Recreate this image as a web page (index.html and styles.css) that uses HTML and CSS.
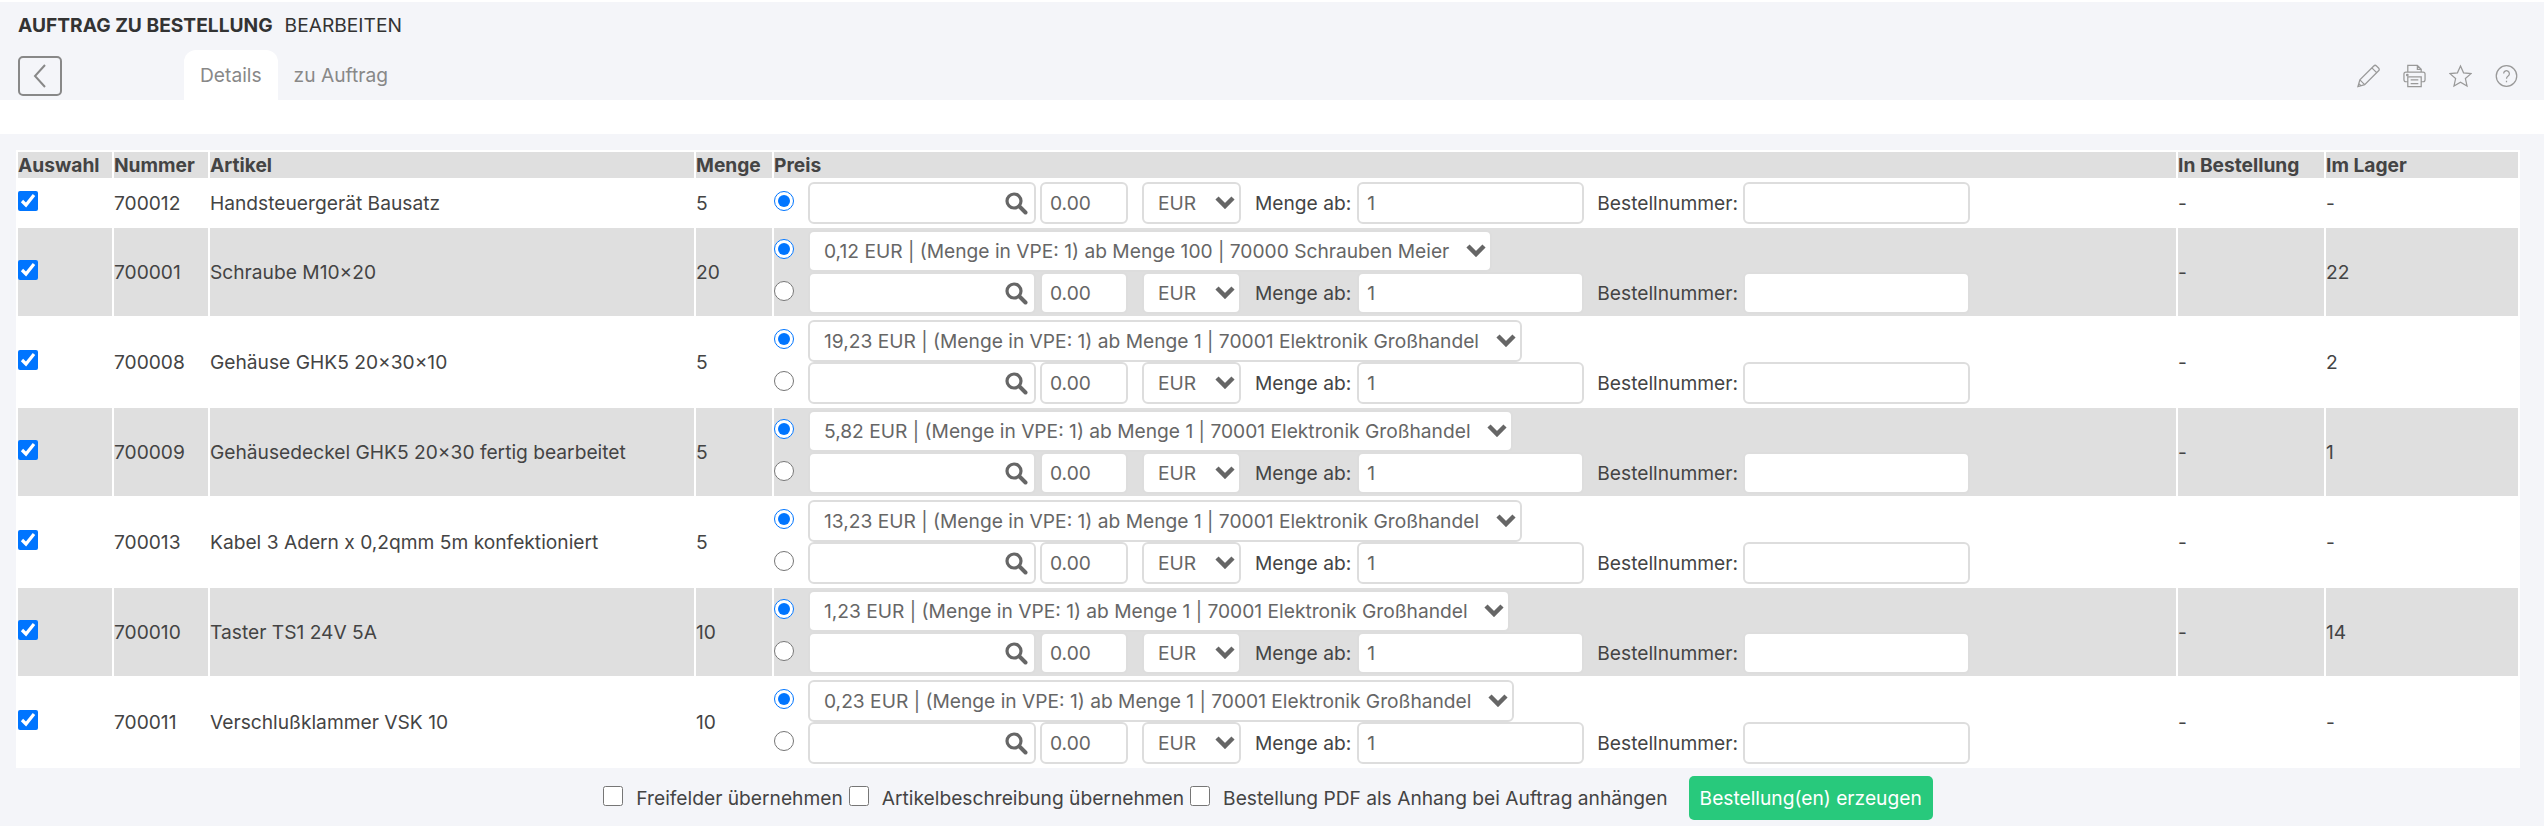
FILE: index.html
```html
<!DOCTYPE html>
<html lang="de">
<head>
<meta charset="utf-8">
<title>Auftrag zu Bestellung</title>
<link rel="stylesheet" href="styles.css">
</head>
<body>
<header class="head">
  <h1 class="title"><strong>AUFTRAG ZU BESTELLUNG</strong><span>BEARBEITEN</span></h1>
  <div class="bar">
    <button class="back" type="button" aria-label="Zurück"><svg width="16" height="26" viewBox="0 0 16 26"><path d="M13 2 3 13l10 11" fill="none" stroke="#888" stroke-width="2"/></svg></button>
    <nav class="tabs"><a class="tab active">Details</a><a class="tab">zu Auftrag</a></nav>
    <div class="tools">
      <svg width="23" height="24" viewBox="0 0 24 24" fill="none" stroke="#999" stroke-width="1.3"><path d="M1 23l2-7L17.5 1.5a2 2 0 0 1 2.8 0l2.2 2.2a2 2 0 0 1 0 2.8L8 21zM3 16l5 5M15.5 3.5l5 5M2 20l2 2"/></svg>
      <svg width="23" height="24" viewBox="0 0 24 24" fill="none" stroke="#999" stroke-width="1.3"><path d="M5 8V1h10l4 4v3M15 1v4h4M5 18H3a2 2 0 0 1-2-2v-6a2 2 0 0 1 2-2h18a2 2 0 0 1 2 2v6a2 2 0 0 1-2 2h-2M5 13h14v10H5zM8 16h8M8 20h8"/><circle cx="4.500" cy="11" r=".8"/></svg>
      <svg width="23" height="24" viewBox="0 0 24 24" fill="none" stroke="#999" stroke-width="1.3"><path d="m12 1.500 3.200 7.200 7.800.8-5.900 5.200 1.700 7.700L12 18.400l-6.800 4 1.700-7.700L1 9.500l7.800-.8z"/></svg>
      <svg width="23" height="24" viewBox="0 0 24 24" fill="none" stroke="#999" stroke-width="1.3"><circle cx="12" cy="12" r="10.700"/><path d="M9 9.500a3 3 0 1 1 4.700 2.500c-1 .7-1.700 1.300-1.700 2.800M12 17v1.500"/></svg>
    </div>
  </div>
</header>
<div class="gap"></div>
<main class="main">
  <table class="grid">
    <colgroup><col class="c1"><col class="c2"><col class="c3"><col class="c4"><col class="c5"><col class="c6"><col class="c7"></colgroup>
    <thead><tr><th>Auswahl</th><th>Nummer</th><th>Artikel</th><th>Menge</th><th>Preis</th><th>In Bestellung</th><th>Im Lager</th></tr></thead>
    <tbody>
      <tr>
        <td><input class="tick" type="checkbox" checked></td><td>700012</td><td>Handsteuergerät Bausatz</td><td>5</td>
        <td>
          <div class="line"><input class="pick" type="radio" name="p1" checked>
            <span class="search"><input class="field f-search" type="text"><svg class="lens" width="24" height="24" viewBox="0 0 24 24"><circle cx="10" cy="10" r="7" fill="none" stroke="#666" stroke-width="3.200"/><path d="m15.500 15.500 6 6" stroke="#666" stroke-width="4" stroke-linecap="round"/></svg></span>
            <input class="field f-price" type="text" value="0.00">
            <span class="sel"><select class="field f-cur"><option>EUR</option></select><svg class="chev" width="20" height="14" viewBox="0 0 20 14"><path d="m2 3 8 8 8-8" fill="none" stroke="#666" stroke-width="4.500"/></svg></span>
            <label class="lbl">Menge ab:</label><input class="field f-qty" type="text" value="1">
            <label class="lbl lbl2">Bestellnummer:</label><input class="field f-no" type="text">
          </div>
        </td>
        <td>-</td><td>-</td>
      </tr>
      <tr class="alt">
        <td><input class="tick" type="checkbox" checked></td><td>700001</td><td>Schraube M10×20</td><td>20</td>
        <td>
          <div class="line"><input class="pick" type="radio" name="p2" checked>
            <span class="sel"><select class="field f-offer"><option>0,12 EUR | (Menge in VPE: 1) ab Menge 100 | 70000 Schrauben Meier</option></select><svg class="chev" width="20" height="14" viewBox="0 0 20 14"><path d="m2 3 8 8 8-8" fill="none" stroke="#666" stroke-width="4.500"/></svg></span>
          </div>
          <div class="line"><input class="pick" type="radio" name="p2">
            <span class="search"><input class="field f-search" type="text"><svg class="lens" width="24" height="24" viewBox="0 0 24 24"><circle cx="10" cy="10" r="7" fill="none" stroke="#666" stroke-width="3.200"/><path d="m15.500 15.500 6 6" stroke="#666" stroke-width="4" stroke-linecap="round"/></svg></span>
            <input class="field f-price" type="text" value="0.00">
            <span class="sel"><select class="field f-cur"><option>EUR</option></select><svg class="chev" width="20" height="14" viewBox="0 0 20 14"><path d="m2 3 8 8 8-8" fill="none" stroke="#666" stroke-width="4.500"/></svg></span>
            <label class="lbl">Menge ab:</label><input class="field f-qty" type="text" value="1">
            <label class="lbl lbl2">Bestellnummer:</label><input class="field f-no" type="text">
          </div>
        </td>
        <td>-</td><td>22</td>
      </tr>
      <tr>
        <td><input class="tick" type="checkbox" checked></td><td>700008</td><td>Gehäuse GHK5 20×30×10</td><td>5</td>
        <td>
          <div class="line"><input class="pick" type="radio" name="p3" checked>
            <span class="sel"><select class="field f-offer"><option>19,23 EUR | (Menge in VPE: 1) ab Menge 1 | 70001 Elektronik Großhandel</option></select><svg class="chev" width="20" height="14" viewBox="0 0 20 14"><path d="m2 3 8 8 8-8" fill="none" stroke="#666" stroke-width="4.500"/></svg></span>
          </div>
          <div class="line"><input class="pick" type="radio" name="p3">
            <span class="search"><input class="field f-search" type="text"><svg class="lens" width="24" height="24" viewBox="0 0 24 24"><circle cx="10" cy="10" r="7" fill="none" stroke="#666" stroke-width="3.200"/><path d="m15.500 15.500 6 6" stroke="#666" stroke-width="4" stroke-linecap="round"/></svg></span>
            <input class="field f-price" type="text" value="0.00">
            <span class="sel"><select class="field f-cur"><option>EUR</option></select><svg class="chev" width="20" height="14" viewBox="0 0 20 14"><path d="m2 3 8 8 8-8" fill="none" stroke="#666" stroke-width="4.500"/></svg></span>
            <label class="lbl">Menge ab:</label><input class="field f-qty" type="text" value="1">
            <label class="lbl lbl2">Bestellnummer:</label><input class="field f-no" type="text">
          </div>
        </td>
        <td>-</td><td>2</td>
      </tr>
      <tr class="alt">
        <td><input class="tick" type="checkbox" checked></td><td>700009</td><td>Gehäusedeckel GHK5 20×30 fertig bearbeitet</td><td>5</td>
        <td>
          <div class="line"><input class="pick" type="radio" name="p4" checked>
            <span class="sel"><select class="field f-offer"><option>5,82 EUR | (Menge in VPE: 1) ab Menge 1 | 70001 Elektronik Großhandel</option></select><svg class="chev" width="20" height="14" viewBox="0 0 20 14"><path d="m2 3 8 8 8-8" fill="none" stroke="#666" stroke-width="4.500"/></svg></span>
          </div>
          <div class="line"><input class="pick" type="radio" name="p4">
            <span class="search"><input class="field f-search" type="text"><svg class="lens" width="24" height="24" viewBox="0 0 24 24"><circle cx="10" cy="10" r="7" fill="none" stroke="#666" stroke-width="3.200"/><path d="m15.500 15.500 6 6" stroke="#666" stroke-width="4" stroke-linecap="round"/></svg></span>
            <input class="field f-price" type="text" value="0.00">
            <span class="sel"><select class="field f-cur"><option>EUR</option></select><svg class="chev" width="20" height="14" viewBox="0 0 20 14"><path d="m2 3 8 8 8-8" fill="none" stroke="#666" stroke-width="4.500"/></svg></span>
            <label class="lbl">Menge ab:</label><input class="field f-qty" type="text" value="1">
            <label class="lbl lbl2">Bestellnummer:</label><input class="field f-no" type="text">
          </div>
        </td>
        <td>-</td><td>1</td>
      </tr>
      <tr>
        <td><input class="tick" type="checkbox" checked></td><td>700013</td><td>Kabel 3 Adern x 0,2qmm 5m konfektioniert</td><td>5</td>
        <td>
          <div class="line"><input class="pick" type="radio" name="p5" checked>
            <span class="sel"><select class="field f-offer"><option>13,23 EUR | (Menge in VPE: 1) ab Menge 1 | 70001 Elektronik Großhandel</option></select><svg class="chev" width="20" height="14" viewBox="0 0 20 14"><path d="m2 3 8 8 8-8" fill="none" stroke="#666" stroke-width="4.500"/></svg></span>
          </div>
          <div class="line"><input class="pick" type="radio" name="p5">
            <span class="search"><input class="field f-search" type="text"><svg class="lens" width="24" height="24" viewBox="0 0 24 24"><circle cx="10" cy="10" r="7" fill="none" stroke="#666" stroke-width="3.200"/><path d="m15.500 15.500 6 6" stroke="#666" stroke-width="4" stroke-linecap="round"/></svg></span>
            <input class="field f-price" type="text" value="0.00">
            <span class="sel"><select class="field f-cur"><option>EUR</option></select><svg class="chev" width="20" height="14" viewBox="0 0 20 14"><path d="m2 3 8 8 8-8" fill="none" stroke="#666" stroke-width="4.500"/></svg></span>
            <label class="lbl">Menge ab:</label><input class="field f-qty" type="text" value="1">
            <label class="lbl lbl2">Bestellnummer:</label><input class="field f-no" type="text">
          </div>
        </td>
        <td>-</td><td>-</td>
      </tr>
      <tr class="alt">
        <td><input class="tick" type="checkbox" checked></td><td>700010</td><td>Taster TS1 24V 5A</td><td>10</td>
        <td>
          <div class="line"><input class="pick" type="radio" name="p6" checked>
            <span class="sel"><select class="field f-offer"><option>1,23 EUR | (Menge in VPE: 1) ab Menge 1 | 70001 Elektronik Großhandel</option></select><svg class="chev" width="20" height="14" viewBox="0 0 20 14"><path d="m2 3 8 8 8-8" fill="none" stroke="#666" stroke-width="4.500"/></svg></span>
          </div>
          <div class="line"><input class="pick" type="radio" name="p6">
            <span class="search"><input class="field f-search" type="text"><svg class="lens" width="24" height="24" viewBox="0 0 24 24"><circle cx="10" cy="10" r="7" fill="none" stroke="#666" stroke-width="3.200"/><path d="m15.500 15.500 6 6" stroke="#666" stroke-width="4" stroke-linecap="round"/></svg></span>
            <input class="field f-price" type="text" value="0.00">
            <span class="sel"><select class="field f-cur"><option>EUR</option></select><svg class="chev" width="20" height="14" viewBox="0 0 20 14"><path d="m2 3 8 8 8-8" fill="none" stroke="#666" stroke-width="4.500"/></svg></span>
            <label class="lbl">Menge ab:</label><input class="field f-qty" type="text" value="1">
            <label class="lbl lbl2">Bestellnummer:</label><input class="field f-no" type="text">
          </div>
        </td>
        <td>-</td><td>14</td>
      </tr>
      <tr>
        <td><input class="tick" type="checkbox" checked></td><td>700011</td><td>Verschlußklammer VSK 10</td><td>10</td>
        <td>
          <div class="line"><input class="pick" type="radio" name="p7" checked>
            <span class="sel"><select class="field f-offer"><option>0,23 EUR | (Menge in VPE: 1) ab Menge 1 | 70001 Elektronik Großhandel</option></select><svg class="chev" width="20" height="14" viewBox="0 0 20 14"><path d="m2 3 8 8 8-8" fill="none" stroke="#666" stroke-width="4.500"/></svg></span>
          </div>
          <div class="line"><input class="pick" type="radio" name="p7">
            <span class="search"><input class="field f-search" type="text"><svg class="lens" width="24" height="24" viewBox="0 0 24 24"><circle cx="10" cy="10" r="7" fill="none" stroke="#666" stroke-width="3.200"/><path d="m15.500 15.500 6 6" stroke="#666" stroke-width="4" stroke-linecap="round"/></svg></span>
            <input class="field f-price" type="text" value="0.00">
            <span class="sel"><select class="field f-cur"><option>EUR</option></select><svg class="chev" width="20" height="14" viewBox="0 0 20 14"><path d="m2 3 8 8 8-8" fill="none" stroke="#666" stroke-width="4.500"/></svg></span>
            <label class="lbl">Menge ab:</label><input class="field f-qty" type="text" value="1">
            <label class="lbl lbl2">Bestellnummer:</label><input class="field f-no" type="text">
          </div>
        </td>
        <td>-</td><td>-</td>
      </tr>
    </tbody>
  </table>
  <div class="foot">
    <label class="opt"><input class="box" type="checkbox"><span>Freifelder übernehmen</span></label>
    <label class="opt"><input class="box" type="checkbox"><span>Artikelbeschreibung übernehmen</span></label>
    <label class="opt"><input class="box" type="checkbox"><span>Bestellung PDF als Anhang bei Auftrag anhängen</span></label>
    <button class="go" type="button">Bestellung(en) erzeugen</button>
  </div>
</main>
</body>
</html>
```

FILE: styles.css
```css
* { box-sizing: border-box; }
html, body { margin: 0; padding: 0; }
body {
  background: #f4f5f9;
  color: #444;
  font-family: Inter, "Liberation Sans", sans-serif;
  font-size: 19.2px;
  line-height: 26px;
  border-top: 2px solid #fff;
}
.head { height: 98px; padding: 8px 26px 0 18px; }
.title { margin: 0; height: 30px; font-size: 19.2px; line-height: 30px; font-weight: 400; color: #333; display: flex; gap: 12px; }
.title strong { font-weight: 700; }
.bar { display: flex; height: 50px; margin-top: 10px; }
.back { width: 44px; height: 40px; margin-top: 6px; padding: 0; background: transparent; border: 2px solid #888; border-radius: 5px; display: flex; align-items: center; justify-content: center; }
.tabs { display: flex; margin-left: 122px; }
.tab { padding: 12px 16px 0; color: #888; font-size: 19.2px; line-height: 26px; border-radius: 12px 12px 0 0; }
.tab.active { background: #fff; }
.tools { margin-left: auto; display: flex; gap: 23px; padding-top: 14px; height: 38px; }
.gap { height: 34px; background: #fff; }
.main { padding: 16px 24px 0 16px; }
.grid { width: 2504px; table-layout: fixed; border-collapse: separate; border-spacing: 2px; background: #fff; }
.c1, .c2 { width: 94px; }
.c3 { width: 484px; }
.c4 { width: 76px; }
.c5 { width: 1402px; }
.c6 { width: 146px; }
.c7 { width: 192px; }
th { background: #dfdfdf; padding: 0; height: 26px; text-align: left; font-weight: 700; color: #444; }
td { padding: 2px 0; vertical-align: middle; }
.alt td { background: #dfdfdf; }
.tick { display: block; width: 20px; height: 20px; margin: 0 0 5px; }
.line { display: flex; align-items: center; height: 42px; }
.pick { width: 20px; height: 20px; margin: 0 14px 5px 0; flex: none; }
.field { height: 42px; border: 2px solid #ddd; border-radius: 6px; background: #fff; color: #666; font: 19.2px Inter, "Liberation Sans", sans-serif; padding: 0 8px; outline: none; }
.search { position: relative; display: block; }
.f-search { display: block; width: 228px; }
.lens { position: absolute; right: 8px; top: 9px; }
.f-price { width: 88px; margin: 0 14px 0 4px; }
.sel { position: relative; display: block; }
select.field { appearance: none; -webkit-appearance: none; display: block; padding: 0 40px 0 14px; }
.f-cur { width: 99px; }
.chev { position: absolute; right: 6px; top: 13px; pointer-events: none; }
.lbl { margin: 0 6px 0 14px; white-space: nowrap; }
.lbl2 { margin: 0 5px 0 13px; }
.f-qty, .f-no { width: 227px; }
.foot { display: flex; justify-content: center; align-items: center; height: 58px; padding-top: 2px; }
.opt { display: flex; align-items: center; margin-right: 6px; }
.box { width: 20px; height: 20px; margin: 0 13px 4px 0; }
.go { margin-left: 15px; width: 244px; height: 44px; border: 0; border-radius: 5px; background: #28c97c; color: #fff; font: 19.2px Inter, "Liberation Sans", sans-serif; padding: 0; }
```
